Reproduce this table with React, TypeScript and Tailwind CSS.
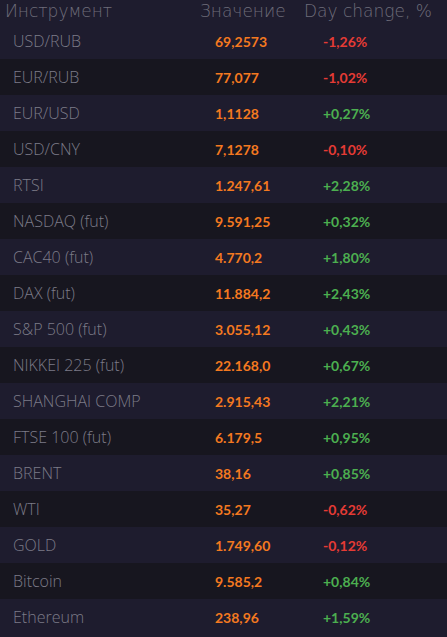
const rows: [string, string, string][] = [
  ["USD/RUB", "69,2573", "-1,26%"],
  ["EUR/RUB", "77,077", "-1,02%"],
  ["EUR/USD", "1,1128", "+0,27%"],
  ["USD/CNY", "7,1278", "-0,10%"],
  ["RTSI", "1.247,61", "+2,28%"],
  ["NASDAQ (fut)", "9.591,25", "+0,32%"],
  ["CAC40 (fut)", "4.770,2", "+1,80%"],
  ["DAX (fut)", "11.884,2", "+2,43%"],
  ["S&P 500 (fut)", "3.055,12", "+0,43%"],
  ["NIKKEI 225 (fut)", "22.168,0", "+0,67%"],
  ["SHANGHAI COMP", "2.915,43", "+2,21%"],
  ["FTSE 100 (fut)", "6.179,5", "+0,95%"],
  ["BRENT", "38,16", "+0,85%"],
  ["WTI", "35,27", "-0,62%"],
  ["GOLD", "1.749,60", "-0,12%"],
  ["Bitcoin", "9.585,2", "+0,84%"],
  ["Ethereum", "238,96", "+1,59%"],
];

export default function App() {
  return (
    <div className="min-h-screen w-[447px] bg-[#1e1c2e]">
      <div className="flex h-[23px] items-center text-[17px] text-[#6e6d7a] font-['DejaVu_Sans',sans-serif] font-light">
        <span className="pl-[5px] w-[200px]">Инструмент</span>
        <span className="w-[104px]">Значение</span>
        <span>Day change, %</span>
      </div>
      {rows.map(([name, value, change], i) => (
        <div
          key={name}
          className={`flex h-9 items-center ${i % 2 === 1 ? "bg-[#17161f]" : "bg-[#1e1c2e]"}`}
        >
          <span className="pl-[13px] w-[215px] text-[16px] text-[#7c7b88] font-['Open_Sans',sans-serif] font-light">
            {name}
          </span>
          <span className="w-[108px] text-[14px] font-bold text-[#f47920] font-['Lato',sans-serif]">
            {value}
          </span>
          <span
            className={`text-[14px] font-bold font-['Lato',sans-serif] ${change.startsWith("-") ? "text-[#e53b35]" : "text-[#4caf50]"}`}
          >
            {change}
          </span>
        </div>
      ))}
    </div>
  );
}
